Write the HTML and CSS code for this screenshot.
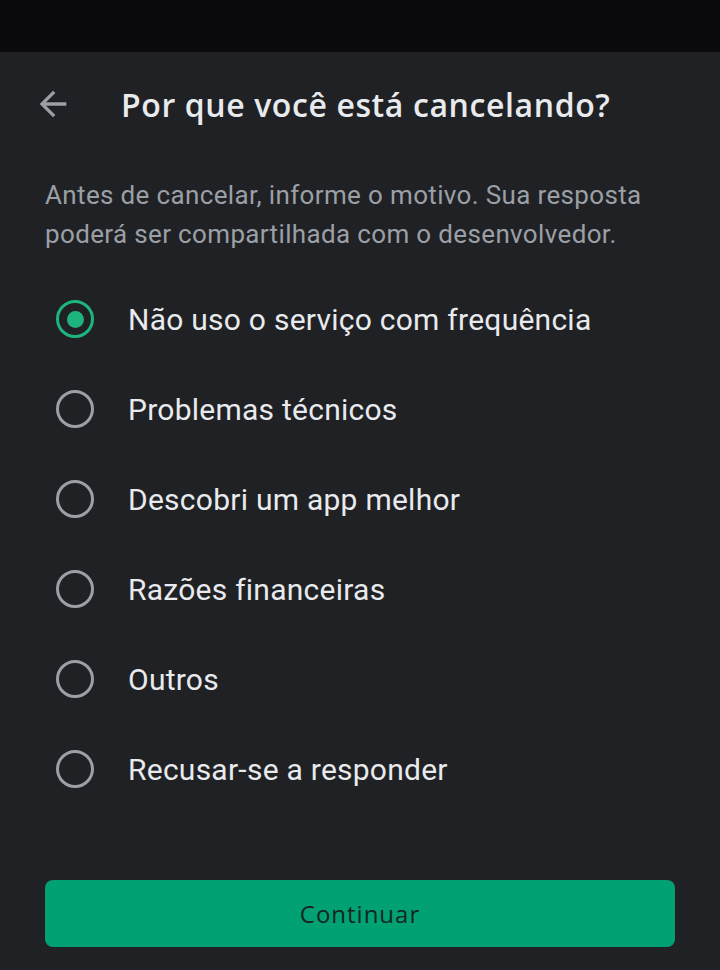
FILE: index.html
```html
<!DOCTYPE html>
<html lang="pt">

<head>
    <meta charset="UTF-8">
    <meta name="viewport" content="width=device-width, initial-scale=1.0">
    <title>Por que você está cancelando?</title>
    <link rel="stylesheet" href="styles.css">
</head>

<body>

    <!-- Status bar -->
    <div class="status-bar"></div>

    <div class="sheet">
        <!-- Header -->
        <div class="header">
            <a class="back">
                <svg width="40" height="40" viewBox="0 0 24 24">
                    <path d="M20 11H7.83l5.59-5.59L12 4l-8 8 8 8 1.41-1.41L7.83 13H20v-2z" fill="#9aa0a6"/>
                </svg>
            </a>
            <h1 class="title">Por que você está cancelando?</h1>
        </div>

        <p class="intro">Antes de cancelar, informe o motivo. Sua resposta poderá ser compartilhada com o desenvolvedor.</p>

        <!-- Reasons -->
        <div class="options">
            <label class="option selected"><span class="radio"></span>Não uso o serviço com frequência</label>
            <label class="option"><span class="radio"></span>Problemas técnicos</label>
            <label class="option"><span class="radio"></span>Descobri um app melhor</label>
            <label class="option"><span class="radio"></span>Razões financeiras</label>
            <label class="option"><span class="radio"></span>Outros</label>
            <label class="option"><span class="radio"></span>Recusar-se a responder</label>
        </div>

        <button class="continue">Continuar</button>
    </div>

</body>

</html>
```

FILE: styles.css
```css
body {
    margin: 0;
    padding: 0;
    background-color: #202124;
    font-family: Roboto, Arial, sans-serif;
    height: 970px;
    overflow: hidden;
}

.status-bar {
    height: 52px;
    background-color: #0a0a0c;
}

.sheet {
    padding: 0 45px;
}

.header {
    display: flex;
    align-items: center;
    height: 104px;
}

.back {
    display: flex;
    margin-left: -12px;
    width: 88px;
}

.title {
    margin: 0;
    font-family: "Open Sans", sans-serif;
    font-weight: 600;
    font-size: 32px;
    color: #e8eaed;
    letter-spacing: 0.6px;
}

.intro {
    margin: 20px 0 0;
    font-size: 26px;
    line-height: 39px;
    letter-spacing: 0.35px;
    color: #9aa0a6;
}

.options {
    display: flex;
    flex-direction: column;
    margin-top: 20px;
}

.option {
    display: flex;
    align-items: center;
    height: 90px;
    font-size: 30px;
    letter-spacing: 0.25px;
    color: #e8eaed;
}

.radio {
    box-sizing: border-box;
    width: 38px;
    height: 38px;
    margin-left: 11px;
    margin-right: 34px;
    border: 3.5px solid #9aa0a6;
    border-radius: 50%;
    display: flex;
    align-items: center;
    justify-content: center;
}

.option.selected .radio {
    border-color: #1db47e;
}

.option.selected .radio::after {
    content: "";
    width: 17px;
    height: 17px;
    border-radius: 50%;
    background-color: #1db47e;
}

.continue {
    display: block;
    width: 100%;
    height: 67px;
    margin-top: 66px;
    border: none;
    border-radius: 8px;
    background-color: #01a173;
    color: #14261f;
    font-family: "Open Sans", sans-serif;
    font-weight: 500;
    font-size: 24px;
    letter-spacing: 1px;
}
```
